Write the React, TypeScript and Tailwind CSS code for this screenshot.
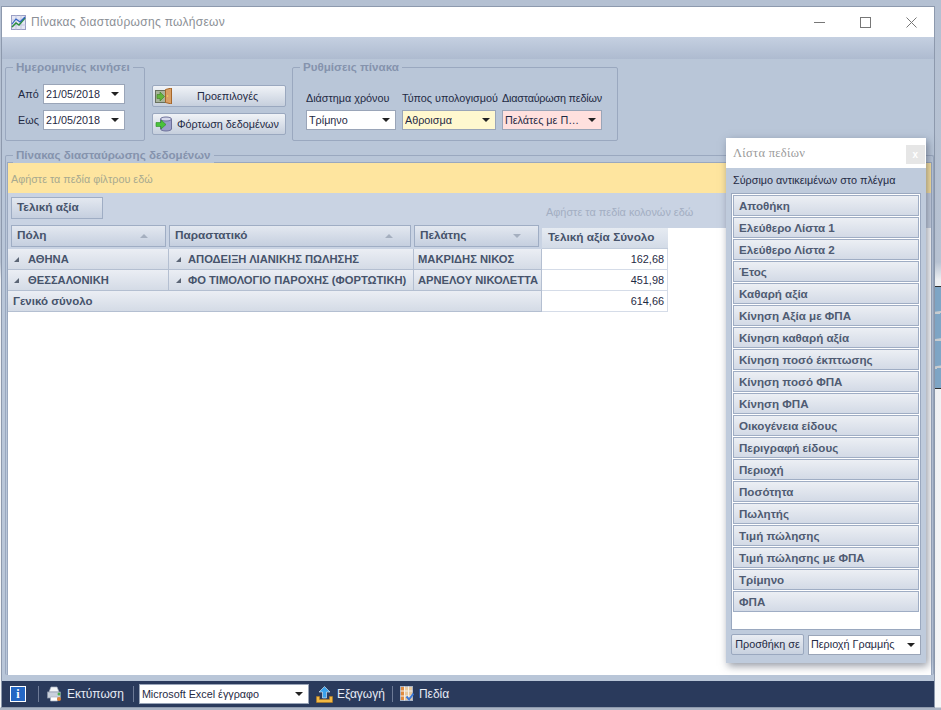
const fields = [
  "Αποθήκη",
  "Ελεύθερο Λίστα 1",
  "Ελεύθερο Λίστα 2",
  "Έτος",
  "Καθαρή αξία",
  "Κίνηση Αξία με ΦΠΑ",
  "Κίνηση καθαρή αξία",
  "Κίνηση ποσό έκπτωσης",
  "Κίνηση ποσό ΦΠΑ",
  "Κίνηση ΦΠΑ",
  "Οικογένεια είδους",
  "Περιγραφή είδους",
  "Περιοχή",
  "Ποσότητα",
  "Πωλητής",
  "Τιμή πώλησης",
  "Τιμή πώλησης με ΦΠΑ",
  "Τρίμηνο",
  "ΦΠΑ",
];

function Arrow() {
  return <span className="border-x-[4px] border-t-[4px] border-x-transparent border-t-[#222] w-0 h-0 shrink-0" />;
}

function Combo({ text, className }: { text: string; className: string }) {
  return (
    <div className={`flex items-center justify-between border border-[#9aa5b8] h-[20px] pl-[2px] pr-[5px] text-[10.8px] text-[#1f2a44] ${className}`}>
      <span className="truncate">{text}</span>
      <Arrow />
    </div>
  );
}

function PivotHeader({ text, width, up = true }: { text: string; width: string; up?: boolean }) {
  return (
    <div className={`flex items-center justify-between h-[22px] border border-[#9fadc4] bg-gradient-to-b from-[#e3e8f0] to-[#c5cfdf] pl-[5px] pr-[17px] text-[11.8px] font-bold text-[#46536b] ${width}`}>
      <span>{text}</span>
      {up ? (
        <span className="border-x-[4px] border-b-[4px] border-x-transparent border-b-[#a5afbf] w-0 h-0" />
      ) : (
        <span className="border-x-[4px] border-t-[4px] border-x-transparent border-t-[#a5afbf] w-0 h-0" />
      )}
    </div>
  );
}

function Expander() {
  return <span className="border-l-[5px] border-b-[5px] border-l-transparent border-b-[#5b6575] w-0 h-0 shrink-0" />;
}

function GroupBox({ title, className, children }: { title: string; className: string; children: React.ReactNode }) {
  return (
    <div className={`relative border border-[#9aa8bf] rounded-[2px] ${className}`}>
      <span className="absolute -top-[9px] left-[7px] bg-[#b9c6d8] px-[3px] text-[11.6px] font-bold leading-[16px] text-[#8593ad] whitespace-nowrap">
        {title}
      </span>
      {children}
    </div>
  );
}

function ActionButton({ text, icon, textClass }: { text: string; icon: React.ReactNode; textClass: string }) {
  return (
    <div className="flex items-center h-[22px] w-[134px] rounded-[2px] border border-[#9aa8bf] bg-gradient-to-b from-[#f0f3f7] to-[#c6cfdd] pl-[2px] text-[10.8px] text-[#1f2a44]">
      {icon}
      <span className={textClass}>{text}</span>
    </div>
  );
}

export default function App() {
  return (
    <div className="relative w-[941px] h-[710px] overflow-hidden bg-[linear-gradient(180deg,#b4c0d2_0,#b8c3d3_262px,#eef0f3_280px,#f6f7f8_707px,#aab4c4_708px)] pt-[6px] pl-[1px] pr-[6px] font-['Liberation_Sans',sans-serif]">
      <div className="flex flex-col h-[702px] border border-[#8d99ad] bg-[#b9c6d8]">
        {/* title bar */}
        <div className="flex items-center h-[30px] bg-white pl-[9px] shrink-0">
          <svg width="15" height="15" viewBox="0 0 15 15" className="mr-[5px]">
            <rect x="0.5" y="0.5" width="14" height="14" fill="#e4e6f4" stroke="#9a9fc4" />
            <path d="M0.500 5h14M0.500 10h14M5 0.500v14M10 0.500v14" stroke="#c3c7de" />
            <path d="M1 12l4-4 3 2 6-7" fill="none" stroke="#2b8f3c" strokeWidth="1.5" />
            <path d="M1 9l4-5 4 3 5-5" fill="none" stroke="#2e62c4" strokeWidth="1.2" />
          </svg>
          <span className="text-[12px] tracking-[0.3px] text-[#8b8f96]">Πίνακας διασταύρωσης πωλήσεων</span>
          <div className="ml-auto flex items-center gap-[35px] pr-[17px]">
            <svg width="11" height="11" viewBox="0 0 11 11"><path d="M0 5.500h11" stroke="#777" /></svg>
            <svg width="11" height="11" viewBox="0 0 11 11"><rect x="0.5" y="0.5" width="10" height="10" fill="none" stroke="#777" /></svg>
            <svg width="11" height="11" viewBox="0 0 11 11"><path d="M0.500 0.500l10 10M10.500 0.500l-10 10" stroke="#777" /></svg>
          </div>
        </div>
        <div className="h-[22px] shrink-0 bg-gradient-to-b from-[#c5d0e1] to-[#aebbd0]" />

        {/* filter panel */}
        <div className="flex items-start h-[86px] shrink-0 pt-[8px] pl-[3px]">
          <GroupBox title="Ημερομηνίες κινήσει" className="w-[140px] h-[74px] flex flex-col gap-[6px] pt-[16px] pl-[12px]">
            <div className="flex items-center h-[20px] text-[10.8px] text-[#1f2a44]">
              <span className="w-[25px]">Από</span>
              <Combo text="21/05/2018" className="w-[82px] bg-white" />
            </div>
            <div className="flex items-center h-[20px] text-[10.8px] text-[#1f2a44]">
              <span className="w-[25px]">Εως</span>
              <Combo text="21/05/2018" className="w-[82px] bg-white" />
            </div>
          </GroupBox>

          <div className="flex flex-col gap-[6px] ml-[7px] pt-[18px]">
            <ActionButton
              text="Προεπιλογές"
              textClass="ml-[25px]"
              icon={
                <svg width="17" height="16" viewBox="0 0 17 16">
                  <rect x="0.5" y="2.500" width="10" height="12" fill="#a9b49c" stroke="#68705e" />
                  <path d="M10.500 1.500l6-1.500v16l-6-1.500z" fill="#d9a066" stroke="#a6672b" />
                  <circle cx="12.500" cy="8" r="0.8" fill="#f6d860" />
                  <path d="M2 6.500h3V4l4.500 4.500L5 13v-2.500H2z" fill="#63b53c" stroke="#3f7d25" strokeWidth="0.6" />
                </svg>
              }
            />
            <ActionButton
              text="Φόρτωση δεδομένων"
              textClass="ml-[4px] whitespace-nowrap"
              icon={
                <svg width="18" height="16" viewBox="0 0 18 16">
                  <path d="M5.500 3v10c0 1 2.500 2 5.500 2s5.500-1 5.500-2V3" fill="#9a9ec9" stroke="#6c7099" />
                  <ellipse cx="11" cy="3" rx="5.500" ry="2" fill="#d6d8ec" stroke="#6c7099" />
                  <path d="M1 6.500h5V4l5 4.500-5 4.500v-2.500H1z" fill="#49c23b" stroke="#2c8c24" strokeWidth="0.6" />
                </svg>
              }
            />
          </div>

          <GroupBox title="Ρυθμίσεις πίνακα" className="ml-[6px] w-[326px] h-[74px] pt-[22px] pl-[13px]">
            <div className="flex text-[10.8px] text-[#1f2a44]">
              <div className="w-[96px]">
                <div className="h-[16px] leading-[16px] whitespace-nowrap mb-[4px]">Διάστημα χρόνου</div>
                <Combo text="Τρίμηνο" className="w-[90px] bg-white" />
              </div>
              <div className="w-[100px]">
                <div className="h-[16px] leading-[16px] whitespace-nowrap mb-[4px]">Τύπος υπολογισμού</div>
                <Combo text="Αθροισμα" className="w-[94px] bg-[#fff8cf]" />
              </div>
              <div className="w-[100px]">
                <div className="h-[16px] leading-[16px] whitespace-nowrap mb-[4px] tracking-[-0.2px]">Διασταύρωση πεδίων</div>
                <Combo text="Πελάτες με Π…" className="w-[100px] bg-[#ffe0de]" />
              </div>
            </div>
          </GroupBox>
        </div>

        {/* pivot group */}
        <GroupBox title="Πίνακας διασταύρωσης δεδομένων" className="flex-1 ml-[3px] mt-[10px] mb-[6px] border-b-0 pt-[6px] px-[1px]">
          <div className="flex flex-col h-full border border-[#9aa8bf] border-b-0 bg-white">
            <div className="flex items-center h-[30px] shrink-0 bg-[#fee59f] pl-[3px] pt-[2px] text-[10.8px] text-[#a7a98f]">
              Αφήστε τα πεδία φίλτρου εδώ
            </div>
            <div className="flex shrink-0 h-[56px]">
              <div className="w-[534px] shrink-0 bg-[#c9d3e3] pl-[3px] pt-[4px]">
                <div className="flex items-center w-[92px] h-[22px] border border-[#9fadc4] bg-gradient-to-b from-[#e3e8f0] to-[#c5cfdf] pl-[5px] text-[11.8px] font-bold text-[#46536b]">
                  Τελική αξία
                </div>
                <div className="flex gap-[3px] mt-[6px]">
                  <PivotHeader text="Πόλη" width="w-[155px]" />
                  <PivotHeader text="Παραστατικό" width="w-[242px]" />
                  <PivotHeader text="Πελάτης" width="w-[125px]" up={false} />
                </div>
              </div>
              <div className="flex-1 flex flex-col">
                <div className="h-[35px] bg-[#c9d3e3] pl-[4px] pt-[11px] text-[10.9px] leading-[16px] text-[#a3aec2] whitespace-nowrap">
                  Αφήστε τα πεδία κολονών εδώ
                </div>
                <div className="flex items-center w-[126px] h-[21px] border-b border-[#c2ccdb] bg-gradient-to-b from-[#e6ebf2] to-[#d3dbe7] pl-[6px] text-[11.8px] font-bold text-[#46536b] whitespace-nowrap">
                  Τελική αξία Σύνολο
                </div>
              </div>
            </div>
            {[
              ["ΑΘΗΝΑ", "ΑΠΟΔΕΙΞΗ ΛΙΑΝΙΚΗΣ ΠΩΛΗΣΗΣ", "ΜΑΚΡΙΔΗΣ ΝΙΚΟΣ", "162,68"],
              ["ΘΕΣΣΑΛΟΝΙΚΗ", "ΦΟ ΤΙΜΟΛΟΓΙΟ ΠΑΡΟΧΗΣ (ΦΟΡΤΩΤΙΚΗ)", "ΑΡΝΕΛΟΥ ΝΙΚΟΛΕΤΤΑ", "451,98"],
            ].map((row) => (
              <div key={row[0]} className="flex h-[21px] shrink-0 text-[11.2px] font-bold text-[#46536b]">
                <div className="flex items-center gap-[9px] w-[161px] pl-[6px] pt-[1px] border-r border-b border-[#b4bfd1] bg-gradient-to-b from-[#ebeef4] to-[#d4dbe6]">
                  <Expander />
                  {row[0]}
                </div>
                <div className="flex items-center gap-[7px] w-[245px] pl-[7px] pt-[1px] border-r border-b border-[#b4bfd1] bg-gradient-to-b from-[#ebeef4] to-[#d4dbe6] whitespace-nowrap">
                  <Expander />
                  {row[1]}
                </div>
                <div className="flex items-center w-[128px] pl-[4px] pt-[1px] border-r border-b border-[#b4bfd1] bg-gradient-to-b from-[#ebeef4] to-[#d4dbe6] whitespace-nowrap">
                  {row[2]}
                </div>
                <div className="flex items-center justify-end w-[126px] pr-[3px] pt-[1px] border-b border-r border-[#d5dce8] bg-white text-[10.9px] font-normal text-[#1f2a44]">
                  {row[3]}
                </div>
              </div>
            ))}
            <div className="flex h-[21px] shrink-0 text-[11.5px] font-bold text-[#46536b]">
              <div className="flex items-center w-[534px] pl-[5px] pt-[1px] border-r border-b border-[#b4bfd1] bg-gradient-to-b from-[#ebeef4] to-[#d4dbe6]">
                Γενικό σύνολο
              </div>
              <div className="flex items-center justify-end w-[126px] pr-[3px] pt-[1px] border-b border-r border-[#d5dce8] bg-white text-[10.9px] font-normal text-[#1f2a44]">
                614,66
              </div>
            </div>
          </div>
        </GroupBox>

        {/* bottom toolbar */}
        <div className="flex items-center h-[26px] shrink-0 bg-[#2a3a5c] pl-[8px] text-[12px] text-[#e6ebf5]">
          <span className="flex items-center justify-center w-[16px] h-[16px] border border-white bg-[#2467c4] text-white text-[12px] font-bold font-['Liberation_Serif',serif]">i</span>
          <span className="w-px h-[16px] bg-[#6d7a96] ml-[12px] mr-[8px]" />
          <svg width="15" height="16" viewBox="0 0 15 16" className="mr-[5px]">
            <path d="M4 1h6l2 5H2z" fill="#f3f5f8" stroke="#a9b2c2" strokeWidth="0.7" />
            <rect x="0.5" y="6" width="13" height="6" fill="#c9d0dc" stroke="#8a94a8" strokeWidth="0.7" />
            <path d="M3.500 11h7v4h-7z" fill="#fff" stroke="#a9b2c2" strokeWidth="0.7" />
            <circle cx="12" cy="8" r="1.500" fill="#4caf50" />
            <circle cx="12" cy="13" r="2" fill="#e0873c" />
          </svg>
          <span>Εκτύπωση</span>
          <span className="w-px h-[16px] bg-[#6d7a96] ml-[9px] mr-[5px]" />
          <Combo text="Microsoft Excel έγγραφο" className="w-[170px] bg-white" />
          <svg width="17" height="17" viewBox="0 0 17 17" className="ml-[7px] mr-[4px]">
            <path d="M0.500 10.500v6h16v-6h-3v3h-10v-3z" fill="#f4b942" stroke="#b97e1c" strokeWidth="0.6" />
            <path d="M8.500 0.500l5.500 5.500h-3.500v6h-4V6H3z" fill="#3ba1ea" stroke="#e8f3fc" strokeWidth="0.6" />
          </svg>
          <span>Εξαγωγή</span>
          <span className="w-px h-[16px] bg-[#6d7a96] ml-[7px] mr-[7px]" />
          <svg width="14" height="16" viewBox="0 0 14 16" className="mr-[5px]">
            <rect x="0.5" y="0.500" width="12" height="14" fill="#e7c9a0" stroke="#aab3c4" />
            <rect x="1" y="1" width="3.500" height="13" fill="#e08a3e" />
            <path d="M0.500 5h12M0.500 10h12M4.500 0.500v14M8.500 0.500v14" stroke="#f3f0ea" />
            <path d="M6.500 10.500l2.500 3 4.500-6" fill="none" stroke="#3b78d8" strokeWidth="2" />
          </svg>
          <span>Πεδία</span>
        </div>
      </div>

      {/* photo of the window behind */}
      <div className="absolute left-[935px] top-[286px] w-[6px] h-[103px] bg-[repeating-linear-gradient(172deg,#7fa6c6_0,#7fa6c6_24px,#c9cdd0_25px,#c9cdd0_27px)] border-y border-y-[#333]" />

      {/* floating field list */}
      <div className="absolute left-[726px] top-[138px] w-[200px] h-[525px] flex flex-col bg-[#bfcbdc] shadow-[2px_3px_8px_rgba(60,70,90,0.55)] z-10">
        <div className="flex items-center justify-between h-[30px] shrink-0 bg-white pl-[7px] pr-[1px] font-['Liberation_Serif',serif] text-[12.5px] tracking-[0.3px] text-[#9a9a9a]">
          <span>Λίστα πεδίων</span>
          <span className="flex items-center justify-center w-[19px] h-[19px] mt-[2px] bg-[#e6e6e6] text-[10px] text-white font-bold font-['Liberation_Sans',sans-serif]">x</span>
        </div>
        <div className="h-[25px] shrink-0 pl-[7px] pt-[5px] text-[10.8px] leading-[14px] text-[#1f2a44] whitespace-nowrap">Σύρσιμο αντικειμένων στο πλέγμα</div>
        <div className="mx-[5px] h-[437px] shrink-0 border border-[#9aa8bf] bg-white p-[1px] flex flex-col gap-[1px]">
          {fields.map((f) => (
            <div key={f} className="flex items-center h-[21px] shrink-0 border border-[#9fadc4] bg-gradient-to-b from-[#eceff4] to-[#d3dae6] pl-[5px] text-[11.6px] font-bold text-[#4f5b72] whitespace-nowrap">
              {f}
            </div>
          ))}
        </div>
        <div className="flex items-center mt-[4px] ml-[5px] gap-[4px]">
          <div className="flex items-center justify-center w-[73px] h-[21px] rounded-[2px] border border-[#9aa8bf] bg-gradient-to-b from-[#e9edf3] to-[#c8d1df] text-[10.8px] text-[#1f2a44] whitespace-nowrap">
            Προσθήκη σε
          </div>
          <Combo text="Περιοχή Γραμμής" className="w-[113px] bg-white" />
        </div>
      </div>
    </div>
  );
}
